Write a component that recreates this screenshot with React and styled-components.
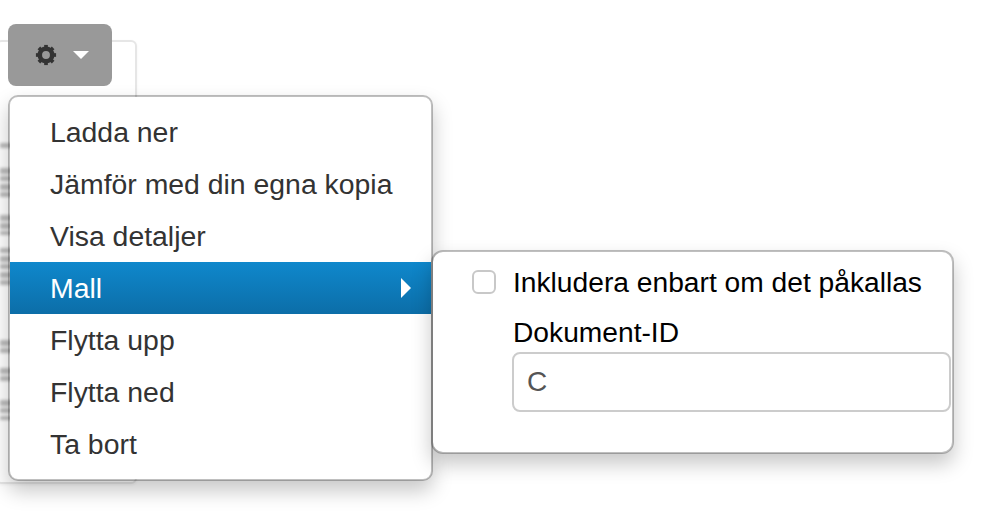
import React from 'react'
import styled, { createGlobalStyle } from 'styled-components'

const GlobalStyle = createGlobalStyle`
  html, body {
    margin: 0;
    padding: 0;
    background: #fff;
    font-family: "Liberation Sans", Arial, sans-serif;
  }
`

const Page = styled.div`
  position: relative;
  width: 984px;
  height: 522px;
  overflow: hidden;
  padding-top: 40px;
  box-sizing: border-box;
`

const DocCard = styled.div`
  width: 141px;
  height: 444px;
  margin-left: -4px;
  padding: 88px 0 0 2px;
  box-sizing: border-box;
  background: #fff;
  border: 2px solid #e6e6e6;
  border-radius: 6px;
  box-shadow: 0 1px 3px rgba(0, 0, 0, 0.05);
`

const Thumb = styled.svg`
  display: block;
`

const Dropdown = styled.div`
  position: absolute;
  left: 8px;
  top: 24px;
`

const GearButton = styled.button`
  width: 104px;
  height: 62px;
  display: flex;
  align-items: center;
  justify-content: center;
  gap: 16px;
  padding: 0 0 0 4px;
  border: 0;
  border-radius: 8px;
  background: #999;
`

const Caret = styled.span`
  width: 0;
  height: 0;
  margin-top: -1px;
  border-top: 8px solid #fff;
  border-left: 8px solid transparent;
  border-right: 8px solid transparent;
`

const Menu = styled.ul`
  position: absolute;
  left: 0;
  top: 71px;
  width: 425px;
  height: 386px;
  box-sizing: border-box;
  margin: 0;
  padding: 9px 0;
  list-style: none;
  background: #fff;
  background-clip: padding-box;
  border: 2px solid rgba(0, 0, 0, 0.25);
  border-radius: 10px;
  box-shadow: 0 10px 20px rgba(0, 0, 0, 0.22);
`

const Item = styled.li`
  position: relative;
  display: flex;
  align-items: center;
  justify-content: space-between;
  height: 52px;
  padding: 0 20px 0 40px;
  font-size: 28.4px;
  color: ${p => (p.$active ? '#fff' : '#333')};
  background: ${p => (p.$active ? 'linear-gradient(to bottom, #0f88cc, #0c6ea8)' : 'transparent')};
`

const SubCaret = styled.span`
  width: 0;
  height: 0;
  border-left: 10px solid #fff;
  border-top: 10px solid transparent;
  border-bottom: 10px solid transparent;
`

const SubPanel = styled.div`
  position: absolute;
  left: 421px;
  top: -12px;
  width: 523px;
  height: 204px;
  box-sizing: border-box;
  padding: 10px 0 0 39px;
  font-size: 28.2px;
  background: #fff;
  background-clip: padding-box;
  border: 2px solid rgba(0, 0, 0, 0.25);
  border-radius: 12px;
  box-shadow: 0 10px 20px rgba(0, 0, 0, 0.22);
`

const CheckRow = styled.label`
  display: flex;
  align-items: center;
  gap: 17px;
  height: 40px;
  color: #000;
`

const CheckBox = styled.span`
  width: 24px;
  height: 24px;
  box-sizing: border-box;
  background: #fff;
  border: 2px solid #c8c8c8;
  border-radius: 6px;
`

const FieldLabel = styled.div`
  margin: 10px 0 0 41px;
  height: 40px;
  line-height: 40px;
  color: #000;
`

const TextField = styled.input`
  display: block;
  width: 439px;
  height: 60px;
  margin: 0 0 0 40px;
  padding: 0 13px;
  box-sizing: border-box;
  font-family: inherit;
  font-size: 28px;
  color: #555;
  background: #fff;
  border: 2px solid #ccc;
  border-radius: 8px;
  outline: none;
`

const menuItems = ['Ladda ner', 'Jämför med din egna kopia', 'Visa detaljer', 'Mall', 'Flytta upp', 'Flytta ned', 'Ta bort']

// text blocks of the page thumbnail that peek out left of the menu: [top, height]
const thumbBlocks = [
  [13, 5], [38, 6], [46, 5], [54, 6], [62, 5], [85, 6], [93, 6], [101, 4], [118, 5], [126, 6],
  [134, 5], [142, 6], [150, 5], [210, 6], [218, 5], [238, 6], [246, 5], [270, 6], [278, 5], [286, 4],
]

const GearIcon = () => (
  <svg width="22" height="22" viewBox="0 0 24 24" aria-hidden="true">
    <g fill="#333">
      {[0, 45, 90, 135, 180, 225, 270, 315].map(a => (
        <rect key={a} x="10" y="1" width="4" height="5" transform={`rotate(${a} 12 12)`} />
      ))}
    </g>
    <circle cx="12" cy="12" r="6.8" fill="none" stroke="#333" strokeWidth="5" />
  </svg>
)

const App = () => {
  return (
    <Page>
      <GlobalStyle />
      <DocCard>
        <Thumb width="12" height="300" viewBox="0 0 12 300">
          <defs>
            <filter id="soft" x="-20%" y="-5%" width="140%" height="110%">
              <feGaussianBlur stdDeviation="1.4" />
            </filter>
          </defs>
          <g filter="url(#soft)">
            {thumbBlocks.map(([y, h]) => (
              <rect key={y} x="0" y={y} width="12" height={h} fill="#bcbcbc" />
            ))}
          </g>
        </Thumb>
      </DocCard>
      <Dropdown>
        <GearButton>
          <GearIcon />
          <Caret />
        </GearButton>
        <Menu>
          {menuItems.map(label => (
            <Item key={label} $active={label === 'Mall'}>
              {label}
              {label === 'Mall' && <SubCaret />}
              {label === 'Mall' && (
                <SubPanel>
                  <CheckRow>
                    <CheckBox />
                    Inkludera enbart om det påkallas
                  </CheckRow>
                  <FieldLabel>Dokument-ID</FieldLabel>
                  <TextField defaultValue="C" />
                </SubPanel>
              )}
            </Item>
          ))}
        </Menu>
      </Dropdown>
    </Page>
  )
}

export default App
